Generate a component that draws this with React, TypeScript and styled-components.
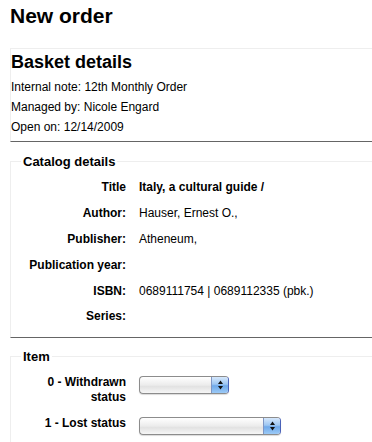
import React from 'react'
import styled, { createGlobalStyle } from 'styled-components'

const GlobalStyle = createGlobalStyle`
  html, body {
    margin: 0;
    padding: 0;
    background: #fff;
  }
  body {
    font-family: "Liberation Sans", Arial, Helvetica, sans-serif;
    font-size: 12px;
    color: #000;
  }
`

const Page = styled.div`
  padding: 4px 0 0 10px;
`

const Title = styled.h1`
  margin: 0;
  font-size: 21px;
  line-height: 24px;
  font-weight: bold;
`

const BasketBox = styled.div`
  margin-top: 20px;
  border: 1px solid #eee;
  border-right: none;
  border-bottom-color: #656565;
  padding: 3px 0 4px 0;
`

const BasketHeading = styled.h2`
  margin: 0 0 4px;
  font-size: 18px;
  line-height: 21px;
  font-weight: bold;
`

const Line = styled.p`
  margin: 0;
  line-height: 20px;
`

const Fieldset = styled.fieldset<{ $gap: number }>`
  margin: ${(p) => p.$gap}px 0 0 0;
  padding: 6px 0 7px 0;
  border: 1px solid #eee;
  border-right: none;
  border-bottom-color: #656565;
  min-width: 0;
`

const Legend = styled.legend`
  margin-left: 10px;
  padding: 0 2px;
  font-size: 13px;
  line-height: 15px;
  font-weight: bold;
`

const Row = styled.div`
  display: flex;
  align-items: flex-start;
  padding: 5.4px 0;
  line-height: 15px;
`

const Label = styled.div`
  width: 115px;
  flex-shrink: 0;
  text-align: right;
  font-weight: bold;
`

const Value = styled.div<{ $bold?: boolean }>`
  margin-left: 13px;
  font-weight: ${(p) => (p.$bold ? 'bold' : 'normal')};
`

const Dropdown = styled.div<{ $width: number }>`
  margin: 1px 0 0 13px;
  width: ${(p) => p.$width}px;
  height: 18px;
  box-sizing: border-box;
  border: 1px solid #8c8c8c;
  border-right-color: #4a62b8;
  border-radius: 4px;
  overflow: hidden;
  display: flex;
  justify-content: flex-end;
  background: linear-gradient(#ffffff, #ececec 50%, #e2e2e2 60%, #f6f6f6);
  box-shadow: 0 1px 1px rgba(0, 0, 0, 0.15);
`

const Stepper = styled.div`
  width: 16px;
  border-left: 1px solid #7f96c4;
  background: linear-gradient(#d6e8fc, #9dc6f2 45%, #6fa9ea 55%, #9ccaf6);
  display: flex;
  align-items: center;
  justify-content: center;
`

function Select({ width }: { width: number }) {
  return (
    <Dropdown $width={width}>
      <Stepper>
        <svg width="7" height="10" viewBox="0 0 7 10">
          <path d="M3.5 0.5 L6 4 L1 4 Z" fill="#111" />
          <path d="M1 6 L6 6 L3.5 9.5 Z" fill="#111" />
        </svg>
      </Stepper>
    </Dropdown>
  )
}

const catalog = [
  { label: 'Title', value: 'Italy, a cultural guide /', bold: true },
  { label: 'Author:', value: 'Hauser, Ernest O.,' },
  { label: 'Publisher:', value: 'Atheneum,' },
  { label: 'Publication year:', value: '' },
  { label: 'ISBN:', value: '0689111754 | 0689112335 (pbk.)' },
  { label: 'Series:', value: '' },
]

export default function App() {
  return (
    <>
      <GlobalStyle />
      <Page>
        <Title>New order</Title>
        <BasketBox>
          <BasketHeading>Basket details</BasketHeading>
          <Line>Internal note: 12th Monthly Order</Line>
          <Line>Managed by: Nicole Engard</Line>
          <Line>Open on: 12/14/2009</Line>
        </BasketBox>

        <Fieldset $gap={12}>
          <Legend>Catalog details</Legend>
          {catalog.map((r) => (
            <Row key={r.label}>
              <Label>{r.label}</Label>
              <Value $bold={r.bold}>{r.value}</Value>
            </Row>
          ))}
        </Fieldset>

        <Fieldset $gap={11}>
          <Legend>Item</Legend>
          <Row>
            <Label>0 - Withdrawn status</Label>
            <Select width={90} />
          </Row>
          <Row>
            <Label>1 - Lost status</Label>
            <Select width={142} />
          </Row>
        </Fieldset>
      </Page>
    </>
  )
}
